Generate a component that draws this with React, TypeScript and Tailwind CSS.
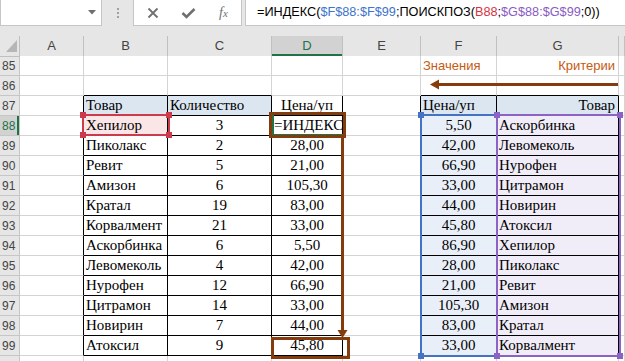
import React from "react";

const GRID = "grid grid-cols-[20px_64px_84px_104px_71px_78px_76px_122px_1fr]";
const COLS = ["A", "B", "C", "D", "E", "F", "G", ""];
const ROWS = [85, 86, 87, 88, 89, 90, 91, 92, 93, 94, 95, 96, 97, 98, 99, 100];

const items: [string, string, string][] = [
  ["Хепилор", "3", "=ИНДЕКС"],
  ["Пиколакс", "2", "28,00"],
  ["Ревит", "5", "21,00"],
  ["Амизон", "6", "105,30"],
  ["Кратал", "19", "83,00"],
  ["Корвалмент", "21", "33,00"],
  ["Аскорбинка", "6", "5,50"],
  ["Левомеколь", "4", "42,00"],
  ["Нурофен", "12", "66,90"],
  ["Цитрамон", "14", "33,00"],
  ["Новирин", "7", "44,00"],
  ["Атоксил", "9", "45,80"],
];

const lookup: [string, string][] = [
  ["5,50", "Аскорбинка"],
  ["42,00", "Левомеколь"],
  ["66,90", "Нурофен"],
  ["33,00", "Цитрамон"],
  ["44,00", "Новирин"],
  ["45,80", "Атоксил"],
  ["86,90", "Хепилор"],
  ["28,00", "Пиколакс"],
  ["21,00", "Ревит"],
  ["105,30", "Амизон"],
  ["83,00", "Кратал"],
  ["33,00", "Корвалмент"],
];

type Cell = { text?: string; align?: "left" | "center" | "right"; bg?: string; sans?: boolean };

function getCell(row: number, col: string): Cell {
  if (row === 85 && col === "F") return { text: "Значения", sans: true };
  if (row === 85 && col === "G") return { text: "Критерии", sans: true, align: "right" };
  if (row === 87) {
    if (col === "B") return { text: "Товар", bg: "bg-[#dce6f1]" };
    if (col === "C") return { text: "Количество", bg: "bg-[#dce6f1]" };
    if (col === "D") return { text: "Цена/уп", align: "center" };
    if (col === "F") return { text: "Цена/уп", bg: "bg-[#dce6f1]" };
    if (col === "G") return { text: "Товар", bg: "bg-[#dce6f1]", align: "right" };
  }
  if (row >= 88 && row <= 99) {
    const i = row - 88;
    if (col === "B") return { text: items[i][0], bg: row === 88 ? "bg-[#fbe6e7]" : undefined };
    if (col === "C") return { text: items[i][1], align: "center" };
    if (col === "D") return { text: items[i][2], align: row === 88 ? "left" : "center" };
    if (col === "F") return { text: lookup[i][0], align: "center", bg: "bg-[#e9eff8]" };
    if (col === "G") return { text: lookup[i][1], bg: "bg-[#f1edf8]" };
  }
  return {};
}

function SheetCell({ row, col }: { row: number; col: string }) {
  const c = getCell(row, col);
  const inTable = row >= 87 && row <= 99;
  const rightBlack = inTable && col !== "";
  const bottomBlack =
    (inTable && ["B", "C", "D", "F", "G"].includes(col)) ||
    (row === 86 && ["B", "C", "F", "G"].includes(col));
  const align = c.align === "center" ? "justify-center" : c.align === "right" ? "justify-end pr-[3px]" : "pl-[2px]";
  const font = c.sans
    ? "font-['Liberation_Sans',Arial,sans-serif] text-[13px] text-[#c55a11]"
    : "font-['Liberation_Serif','Times_New_Roman',serif] text-[15px] text-black";
  return (
    <div
      className={`flex items-center overflow-hidden whitespace-nowrap leading-[19px] border-r border-b ${
        rightBlack ? "border-r-black" : "border-r-[#d4d4d4]"
      } ${bottomBlack ? "border-b-black" : "border-b-[#d4d4d4]"} ${c.bg ?? "bg-white"} ${align} ${font}`}
    >
      {c.text}
    </div>
  );
}

function FormulaBar() {
  return (
    <div className="flex h-[36px] bg-[#e6e6e6] font-['Liberation_Sans',Arial,sans-serif]">
      <div className="relative h-[26px] w-[102px] border-x border-b border-[#c6c6c6] bg-white">
        <svg className="absolute left-[87px] top-[10px]" width="8" height="5" viewBox="0 0 8 5">
          <path d="M0 0 H8 L4 4.5 Z" fill="#6e6e6e" />
        </svg>
      </div>
      <div className="flex w-[31px] flex-col items-center gap-[2px] pt-[8px] pl-[1px]">
        <span className="h-[2px] w-[2px] bg-[#a0a0a0]" />
        <span className="h-[2px] w-[2px] bg-[#a0a0a0]" />
        <span className="h-[2px] w-[2px] bg-[#a0a0a0]" />
      </div>
      <div className="flex h-[26px] w-[109px] items-center border-x border-b border-[#c6c6c6] bg-white">
        <svg className="ml-[13px]" width="12" height="12" viewBox="0 0 12 12">
          <path d="M1.5 1.5 L10.5 10.5 M10.5 1.5 L1.5 10.5" stroke="#707070" strokeWidth="1.8" />
        </svg>
        <svg className="ml-[22px]" width="15" height="12" viewBox="0 0 15 12">
          <path d="M1.5 6 L5.5 10 L13.5 2" stroke="#707070" strokeWidth="2.6" fill="none" />
        </svg>
        <span className="ml-[23px] font-['Liberation_Serif',serif] text-[14px] italic text-[#707070]">
          f<span className="text-[11px]">x</span>
        </span>
      </div>
      <div className="ml-[3px] flex h-[26px] flex-1 items-center border-l border-b border-[#c6c6c6] bg-white pl-[11px] text-[12.7px] whitespace-nowrap text-black">
        <span>=ИНДЕКС(</span>
        <span className="text-[#3e74cc]">$F$88:$F$99</span>
        <span>;ПОИСКПОЗ(</span>
        <span className="text-[#d7333f]">B88</span>
        <span>;</span>
        <span className="text-[#8a5cc2]">$G$88:$G$99</span>
        <span>;0))</span>
      </div>
    </div>
  );
}

function Headers() {
  return (
    <div className={`${GRID} h-[20px] font-['Liberation_Sans',Arial,sans-serif] text-[13px]`}>
      <div className="relative border-r border-b border-[#c0c0c0] bg-[#e6e6e6]">
        <svg className="absolute left-[6px] top-[4px]" width="11" height="12" viewBox="0 0 11 12">
          <path d="M11 0 V12 H0 Z" fill="#b6b6b6" />
        </svg>
      </div>
      {COLS.map((c) => (
        <div
          key={c || "x"}
          className={`flex items-center justify-center border-r border-b border-[#c0c0c0] ${
            c === "D" ? "bg-[#d2d2d2] text-[#217346] shadow-[inset_0_-2px_0_#217346]" : "bg-[#e6e6e6] text-[#444]"
          }`}
        >
          {c}
        </div>
      ))}
    </div>
  );
}

function Corners({ color, pts }: { color: string; pts: [number, number][] }) {
  return (
    <>
      {pts.map(([x, y], i) => (
        <div key={i} className={`absolute h-[6px] w-[6px] ${color}`} style={{ left: x - 3, top: y - 3 }} />
      ))}
    </>
  );
}

export default function App() {
  return (
    <div className="relative h-[361px] w-[625px] overflow-hidden bg-white">
      <FormulaBar />
      <Headers />
      {ROWS.map((r) => (
        <div key={r} className={`${GRID} h-[20px]`}>
          <div
            className={`flex items-center border-r border-b border-[#c6c6c6] pl-[2px] font-['Liberation_Sans',Arial,sans-serif] text-[12px] ${
              r === 88 ? "bg-[#d2d2d2] text-[#217346] shadow-[inset_-2px_0_0_#217346]" : "bg-[#e6e6e6] text-[#444]"
            }`}
          >
            {r < 100 ? r : ""}
          </div>
          {COLS.map((c) => (
            <SheetCell key={c || "x"} row={r} col={c} />
          ))}
        </div>
      ))}

      {/* formula reference highlights */}
      <div className="absolute left-[82px] top-[114px] h-[22px] w-[88px] border-2 border-[#cc3b4d]" />
      <Corners color="bg-[#cc3b4d]" pts={[[83, 115], [169, 115], [83, 135], [169, 135]]} />
      <div className="absolute left-[420px] top-[114px] h-[243px] w-[78px] border-2 border-[#4472c4]" />
      <div className="absolute left-[496px] top-[114px] h-[243px] w-[125px] border-2 border-[#8a63c4]" />
      <Corners color="bg-[#4472c4]" pts={[[421, 115], [421, 356]]} />
      <Corners color="bg-[#8a63c4]" pts={[[497, 115], [620, 115], [497, 356], [620, 356]]} />

      {/* active cell, mostly hidden under the brown frame */}
      <div className="absolute left-[272px] top-[113px] h-[23px] w-[73px] border-2 border-[#217346]" />

      {/* brown annotations */}
      <div className="absolute left-[269px] top-[112px] h-[26px] w-[77px] border-[3px] border-[#843c0c]" />
      <div className="absolute left-[271px] top-[337px] h-[22px] w-[79px] border-[3px] border-[#843c0c]" />
      <svg className="absolute left-0 top-0" width="625" height="361" viewBox="0 0 625 361">
        <path d="M342.5 137 V331" stroke="#843c0c" strokeWidth="3" />
        <path d="M337.5 330 H347.5 L342.5 338 Z" fill="#843c0c" />
        <path d="M618 84.5 H438" stroke="#843c0c" strokeWidth="3" />
        <path d="M439 79.5 V89.5 L430 84.5 Z" fill="#843c0c" />
      </svg>
    </div>
  );
}
